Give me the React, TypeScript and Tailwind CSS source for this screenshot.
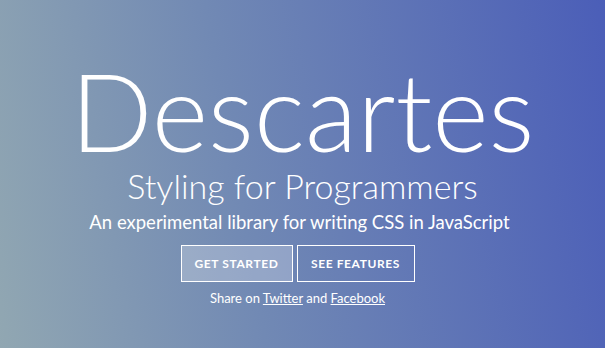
export default function App() {
  return (
    <div className="w-[605px] h-[348px] overflow-hidden bg-[linear-gradient(80deg,#91a7b2_0%,#7189b4_40%,#4b5eb8_100%)] font-['Lato','Liberation_Sans',sans-serif] text-white">
      <div className="flex flex-col items-center pt-[62px]">
        <h1 className="text-[108px] leading-[96px] font-light">Descartes</h1>
        <h2 className="mt-[8px] text-[34px] leading-[40px] font-light">Styling for Programmers</h2>
        <p className="mt-[4px] mr-[6px] text-[18.5px] leading-[24px] font-normal">An experimental library for writing CSS in JavaScript</p>
        <div className="mt-[11px] mr-[10px] flex gap-[4px]">
          <button className="w-[112px] h-[37px] border border-white bg-white/25 text-[12px] font-bold tracking-[0.6px]">GET STARTED</button>
          <button className="w-[118px] h-[37px] border border-white text-[12px] font-bold tracking-[0.6px]">SEE FEATURES</button>
        </div>
        <p className="mt-[7px] mr-[10px] text-[13px] leading-[18px]">
          Share on <a className="underline" href="#">Twitter</a> and <a className="underline" href="#">Facebook</a>
        </p>
      </div>
    </div>
  );
}
